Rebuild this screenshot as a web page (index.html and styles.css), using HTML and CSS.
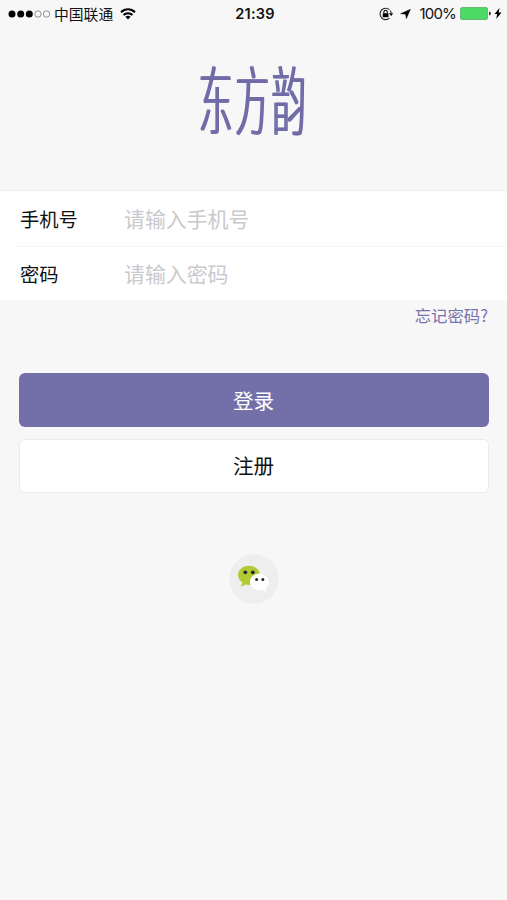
FILE: index.html
```html
<!DOCTYPE html>
<html lang="zh-CN">
<head>
<meta charset="utf-8">
<title>东方韵</title>
<link rel="stylesheet" href="styles.css">
</head>
<body>
<header class="status">
  <div class="status-left">
    <svg class="signal" width="42" height="10" viewBox="0 0 42 10"><g fill="#000"><circle cx="4" cy="5" r="3.5"/><circle cx="12.7" cy="5" r="3.5"/><circle cx="21.3" cy="5" r="3.5"/></g><g fill="none" stroke="#777" stroke-width=".8"><circle cx="30" cy="5" r="3.2"/><circle cx="38.5" cy="5" r="3.2"/></g></svg>
    <span class="carrier">中国联通</span>
    <svg class="wifi" width="16" height="12" viewBox="0 0 16 12"><g fill="none" stroke="#000" stroke-width="2"><path d="M1 4.3C5 .3 11 .3 15 4.3M3.5 7C6 4.5 10 4.5 12.500 7"/></g><path d="M5.400 8.800Q8 6.600 10.600 8.800L8 11.500Z"/></svg>
  </div>
  <time class="clock">21:39</time>
  <div class="status-right">
    <svg class="lock" width="16" height="14" viewBox="0 0 16 14"><path d="M11.500 2.600A5.700 5.700 0 1 0 11.500 11.200M12.200 3.500A5.700 5.700 0 0 1 13.100 6" fill="none" stroke="#222" stroke-width="1.100"/><path d="M10.900 6.300h4.400l-2.200 2.800z"/><rect x="4.700" y="6.200" width="5.800" height="4" rx=".5"/><path d="M5.900 6.500V5a1.700 1.700 0 0 1 3.400 0v1.500" fill="none" stroke="#000" stroke-width="1.100"/></svg>
    <svg class="arrow" width="11" height="10" viewBox="0 0 11 10"><path d="M10.500.2 6.300 9.700 5.600 5.200.5 4.700Z" stroke="#000" stroke-width=".4"/></svg>
    <span class="percent">100%</span>
    <svg class="battery" width="31" height="13" viewBox="0 0 31 13"><rect x=".5" y=".5" width="27" height="12" rx="1.500" fill="#4cd964" stroke="#69ba73"/><path d="M29 4.500q2 .3 2 2t-2 2z" fill="#333"/></svg>
    <svg class="bolt" width="8" height="11" viewBox="0 0 8 11"><path d="M5.500 0 .5 6h2.700L2.200 11 7.600 4.600H4.700Z"/></svg>
  </div>
</header>
<main>
  <div class="brand"><h1 class="logo">东方韵</h1></div>
  <form>
    <div class="fields">
      <label class="field"><span class="label">手机号</span><input class="input" type="tel" placeholder="请输入手机号"></label>
      <label class="field"><span class="label">密码</span><input class="input" type="password" placeholder="请输入密码"></label>
    </div>
    <a class="forgot">忘记密码?</a>
    <div class="actions">
      <button class="button primary" type="button">登录</button>
      <button class="button secondary" type="button">注册</button>
    </div>
  </form>
  <div class="social">
    <svg width="50" height="50" viewBox="0 0 50 50"><circle cx="25" cy="25" r="24.700" fill="#eee"/><path d="M20 11.800c-6.200 0-11 4.200-11 9.300 0 3 1.600 5.800 4.300 7.500L12 32.700l4.600-2.200c1.100.3 2.200.4 3.400.4 6.200 0 11-4.200 11-9.600s-4.800-9.500-11-9.500Z" fill="#b1cb36"/><path d="M30.500 19.700c-5.300 0-9.500 3.700-9.500 8.200s4.200 8.400 9.500 8.400c1.200 0 2.300-.2 3.300-.5l3.800 2.200-.8-3.900c2-1.500 3.100-3.600 3.100-6.200 0-4.500-4.100-8.200-9.400-8.200Z" fill="#fff"/><g fill="#292923"><circle cx="16.300" cy="18.300" r="1.900"/><circle cx="23.800" cy="18.300" r="1.900"/><circle cx="27.600" cy="25.600" r="1.500"/><circle cx="33.800" cy="25.600" r="1.500"/></g></svg>
  </div>
</main>
</body>
</html>
```
FILE: styles.css
```css
* { box-sizing: border-box; }
body {
  margin: 0;
  height: 900px;
  overflow: hidden;
  background: #f7f7f7;
  color: #111;
  font-family: "Noto Sans CJK SC", sans-serif;
}
svg { display: block; flex: none; }
.status {
  display: grid;
  grid-template-columns: 1fr auto 1fr;
  align-items: center;
  height: 27px;
  padding: 0 5px 0 8px;
  color: #111;
}
.status-left, .status-right { display: flex; align-items: center; }
.status-right { justify-content: flex-end; }
.carrier { margin-left: 4px; font-size: 14.8px; line-height: 26px; }
.wifi { margin-left: 7px; }
.clock { font: 600 14.5px/27px Inter, sans-serif; letter-spacing: .2px; }
.arrow { margin-left: 6px; }
.percent { margin: 0 4px 0 8px; font: 15px/27px Inter, sans-serif; letter-spacing: -.8px; }
.bolt { margin-left: 3px; }
.brand {
  display: flex;
  align-items: center;
  justify-content: center;
  height: 163px;
  padding: 0 0 21px 0;
}
.logo {
  margin: 0;
  color: #716ca8;
  font-size: 34px;
  font-weight: 300;
  line-height: 36px;
  letter-spacing: 2.5px;
  text-shadow: -1px 0 #716ca8, 1px 0 #716ca8;
  transform: scaleY(2.22);
}
.fields { height: 110px; border-top: 1px solid #eee; background: #fff; }
.field { display: flex; align-items: center; height: 55px; margin-left: 15px; padding-left: 5px; }
.field + .field { height: 54px; border-top: 1px solid #f5f5f5; }
.label { width: 104px; font-size: 19.3px; line-height: 30px; }
.input {
  flex: 1;
  min-width: 0;
  height: 34px;
  padding: 0 0 2px;
  border: 0;
  outline: 0;
  background: transparent;
  font: 20.9px "Noto Sans CJK SC", sans-serif;
}
.input::placeholder { color: #c9c9ce; opacity: 1; }
.forgot {
  display: block;
  height: 33px;
  padding-right: 19px;
  color: #7771ac;
  font-size: 16.4px;
  line-height: 31px;
  text-align: right;
}
.actions { display: grid; gap: 12px; padding: 40px 18px 0 19px; }
.button {
  height: 54px;
  padding: 0 1px 1px 0;
  border: 0;
  border-radius: 6px;
  font: 20.6px/50px "Noto Sans CJK SC", sans-serif;
}
.primary { background: #736fa8; color: #fff; }
.secondary { padding-bottom: 2px; border: 1px solid #ebebeb; background: #fff; color: #111; }
.social { display: flex; justify-content: center; padding-top: 61px; }
```
